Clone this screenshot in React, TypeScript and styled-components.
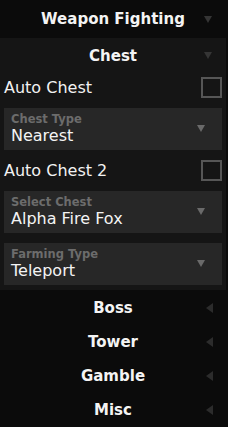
import React from "react"
import styled, { createGlobalStyle } from "styled-components"

const GlobalStyle = createGlobalStyle`
  html, body {
    margin: 0;
    padding: 0;
    background: #0b0b0b;
  }
  body {
    font-family: "DejaVu Sans", "Liberation Sans", sans-serif;
    color: #f2f2f2;
    width: 228px;
    height: 427px;
    overflow: hidden;
  }
`

const Panel = styled.div`
  width: 226px;
  display: flex;
  flex-direction: column;
`

const Header = styled.div<{ $tall?: boolean }>`
  position: relative;
  height: ${(p) => (p.$tall ? 38 : 34)}px;
  display: flex;
  align-items: center;
  justify-content: center;
  font-weight: bold;
  font-size: 15px;
  color: #f4f4f4;
`

const Arrow = styled.span<{ $open?: boolean }>`
  position: absolute;
  top: 50%;
  width: 0;
  height: 0;
  ${(p) =>
    p.$open
      ? `
    right: 14px;
    margin-top: -3px;
    border-left: 4px solid transparent;
    border-right: 4px solid transparent;
    border-top: 7px solid #353535;
  `
      : `
    right: 13px;
    margin-top: -5px;
    border-top: 5px solid transparent;
    border-bottom: 5px solid transparent;
    border-right: 7px solid #2c2c2c;
  `}
`

const Section = styled.div`
  background: #151515;
  display: flex;
  flex-direction: column;
  padding: 0 4px;
  margin-bottom: 1px;
`

const SectionHeader = styled(Header)`
  margin: 0 -4px;
  padding-top: 2px;
  box-sizing: border-box;
`

const ToggleRow = styled.div`
  height: 31px;
  display: flex;
  align-items: center;
  justify-content: space-between;
  font-size: 16px;
  color: #f2f2f2;
`

const Checkbox = styled.div`
  width: 17px;
  height: 17px;
  border: 2px solid #565656;
  box-sizing: content-box;
`

const DropWrap = styled.div`
  padding: 5px 0;
`

const DropBox = styled.div`
  position: relative;
  height: 42px;
  background: #272727;
  padding: 5px 7px 0 7px;
  box-sizing: border-box;
`

const DropLabel = styled.div`
  font-size: 11.5px;
  font-weight: bold;
  line-height: 13px;
  color: #6c6c6c;
`

const DropValue = styled.div`
  font-size: 16px;
  line-height: 19px;
  color: #f4f4f4;
`

const DropArrow = styled.span`
  position: absolute;
  right: 17px;
  top: 17px;
  width: 0;
  height: 0;
  border-left: 4px solid transparent;
  border-right: 4px solid transparent;
  border-top: 7px solid #6a6a6a;
`

function Dropdown({ label, value }: { label: string; value: string }) {
  return (
    <DropWrap>
      <DropBox>
        <DropLabel>{label}</DropLabel>
        <DropValue>{value}</DropValue>
        <DropArrow />
      </DropBox>
    </DropWrap>
  )
}

function Toggle({ label }: { label: string }) {
  return (
    <ToggleRow>
      <span>{label}</span>
      <Checkbox />
    </ToggleRow>
  )
}

const collapsed = ["Boss", "Tower", "Gamble", "Misc"]

export default function App() {
  return (
    <>
      <GlobalStyle />
      <Panel>
        <Header $tall>
          Weapon Fighting
          <Arrow $open />
        </Header>
        <Section>
          <SectionHeader>
            Chest
            <Arrow $open />
          </SectionHeader>
          <Toggle label="Auto Chest" />
          <Dropdown label="Chest Type" value="Nearest" />
          <Toggle label="Auto Chest 2" />
          <Dropdown label="Select Chest" value="Alpha Fire Fox" />
          <Dropdown label="Farming Type" value="Teleport" />
        </Section>
        {collapsed.map((name) => (
          <Header key={name}>
            {name}
            <Arrow />
          </Header>
        ))}
      </Panel>
    </>
  )
}
